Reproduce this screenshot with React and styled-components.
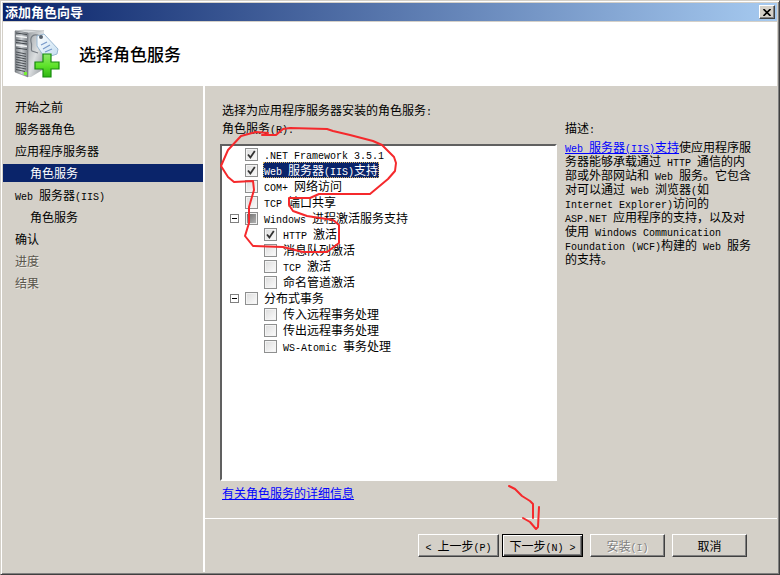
import React from "react";
import styled, { createGlobalStyle } from "styled-components";

const GlobalStyle = createGlobalStyle`
  * {
    box-sizing: border-box;
  }
  body {
    margin: 0;
    background: #d4d0c8;
    color: #000;
    font-family: "Noto Sans CJK SC", sans-serif;
    font-size: 12px;
    line-height: 16px;
  }
`;

const Window = styled.div`
  position: relative;
  display: flex;
  flex-direction: column;
  min-height: 100vh;
  padding: 1px;
  border: 1px solid;
  border-color: #d4d0c8 #404040 #404040 #d4d0c8;
  box-shadow: inset 1px 1px #fff, inset -1px -1px #808080;
`;

const TitleBar = styled.div`
  display: flex;
  align-items: center;
  justify-content: space-between;
  height: 18px;
  margin: 1px;
  padding: 0 2px;
  background: linear-gradient(to right, #0a246a, #a6caf0);
  color: #fff;
  font-size: 13px;
  font-weight: 700;
`;

const CloseButton = styled.button`
  display: flex;
  align-items: center;
  justify-content: center;
  width: 16px;
  height: 14px;
  padding: 0;
  border: 1px solid;
  border-color: #fff #404040 #404040 #fff;
  box-shadow: inset -1px -1px #808080;
  background: #d4d0c8;
`;

const Header = styled.header`
  display: flex;
  align-items: center;
  gap: 16px;
  height: 64px;
  margin: 0 1px;
  padding: 0 10px;
  background: #fff;
`;

const Heading = styled.h1`
  margin: 0;
  font-size: 17px;
  font-weight: 500;
  line-height: 24px;
`;

const Body = styled.div`
  display: flex;
  flex: 1;
  margin: 0 1px 1px;
`;

const Sidebar = styled.nav`
  flex: 0 0 202px;
  padding-top: 12px;
  border-right: 2px solid #fff;
`;

const StepList = styled.ul`
  display: flex;
  flex-direction: column;
  gap: 4px;
  margin: 0;
  padding: 0;
  list-style: none;
`;

const Step = styled.a`
  display: block;
  padding-left: ${(props) => (props.$nested ? 27 : 12)}px;
  background: ${(props) => (props.$active ? "#0a246a" : "transparent")};
  color: ${(props) => (props.$active ? "#fff" : props.$disabled ? "#5a564c" : "#000")};
  text-shadow: ${(props) => (props.$disabled ? "1px 1px #eceae4" : "none")};
  line-height: 18px;
  text-decoration: none;
`;

const Main = styled.main`
  display: flex;
  flex: 1;
  flex-direction: column;
`;

const Content = styled.div`
  display: flex;
  flex: 1;
  gap: 8px;
  padding: 16px 22px 17px 15px;
`;

const Services = styled.section`
  display: flex;
  flex: 1;
  flex-direction: column;
`;

const Caption = styled.p`
  margin: 0 0 2px 2px;
`;

const Tree = styled.ul`
  flex: 1;
  margin: 6px 0 4px;
  padding: 0 0 0 8px;
  border: 2px solid;
  border-color: #606060 #fff #fff #606060;
  background: #fff;
  list-style: none;
`;

const Branch = styled.ul`
  margin: 0;
  padding: 0 0 0 19px;
  list-style: none;
`;

const Row = styled.div`
  display: flex;
  align-items: center;
  height: 16px;
`;

const ExpanderSlot = styled.span`
  display: flex;
  width: 15px;
`;

const Expander = styled.button`
  display: flex;
  align-items: center;
  justify-content: center;
  width: 9px;
  height: 9px;
  padding: 0;
  border: 1px solid #808080;
  background: #fff;

  &::before {
    content: "";
    width: 5px;
    height: 1px;
    background: #000;
  }
`;

const CheckLabel = styled.label`
  display: flex;
  align-items: center;
  gap: 5px;
`;

const BoxStack = styled.span`
  display: grid;
  place-items: center;

  & > * {
    grid-area: 1 / 1;
  }
`;

const Box = styled.input`
  appearance: none;
  width: 13px;
  height: 13px;
  margin: 0;
  border: 1px solid #8e8f8f;
  background: linear-gradient(135deg, #dcdcdc, #fcfcfc);
  box-shadow: inset 0 0 0 1px #f4f4f4;

  &:indeterminate {
    background: linear-gradient(135deg, #666, #b8b8b8);
    box-shadow: inset 0 0 0 1px #f0f0f0;
  }
`;

const Tick = styled.svg`
  pointer-events: none;
`;

const RowText = styled.span`
  padding: 0 1px;
  background: ${(props) => (props.$selected ? "#0a246a" : "transparent")};
  color: ${(props) => (props.$selected ? "#fff" : "#000")};
  outline: ${(props) => (props.$selected ? "1px dotted #d8b060" : "none")};
  outline-offset: -1px;
  white-space: nowrap;
`;

const Latin = styled.span`
  font-family: "Liberation Mono", monospace;
  font-size: 10px;
  line-height: 8px;
`;

const Link = styled.a`
  color: #00f;
`;

const MoreLink = styled(Link)`
  align-self: flex-start;
  margin-left: 2px;
`;

const Description = styled.aside`
  flex: 0 0 190px;
  padding-top: 18px;
`;

const DescriptionText = styled.p`
  margin: 4px 0 0;
  line-height: 14px;
`;

const Footer = styled.footer`
  display: flex;
  justify-content: flex-end;
  gap: 7px;
  padding: 15px 30px 15px;
  border-top: 1px solid #fff;
`;

const ButtonPair = styled.div`
  display: flex;
  gap: 3px;
`;

const Button = styled.button`
  width: ${(props) => (props.$wide ? 81 : 75)}px;
  height: 23px;
  padding: 0;
  border: 1px solid;
  border-color: ${(props) => (props.$primary ? "#000" : "#fff #404040 #404040 #fff")};
  box-shadow: ${(props) =>
    props.$primary
      ? "inset 1px 1px #fff, inset -1px -1px #404040, inset -2px -2px #808080"
      : "inset -1px -1px #808080"};
  background: #d4d0c8;
  color: #000;
  font: inherit;
  white-space: pre;

  &:disabled {
    color: #808080;
    text-shadow: 1px 1px #fff;
  }
`;

const Marks = styled.svg`
  position: absolute;
  top: -1px;
  left: -1px;
  pointer-events: none;
`;

const steps = [
  { name: "开始之前" },
  { name: "服务器角色" },
  { name: "应用程序服务器" },
  { name: "角色服务", nested: true, active: true },
  { name: "Web 服务器(IIS)" },
  { name: "角色服务", nested: true },
  { name: "确认" },
  { name: "进度", disabled: true },
  { name: "结果", disabled: true },
];

const services = [
  { name: ".NET Framework 3.5.1", checked: true },
  { name: "Web 服务器(IIS)支持", checked: true, selected: true },
  { name: "COM+ 网络访问" },
  { name: "TCP 端口共享" },
  {
    name: "Windows 进程激活服务支持",
    partial: true,
    children: [
      { name: "HTTP 激活", checked: true },
      { name: "消息队列激活" },
      { name: "TCP 激活" },
      { name: "命名管道激活" },
    ],
  },
  {
    name: "分布式事务",
    children: [
      { name: "传入远程事务处理" },
      { name: "传出远程事务处理" },
      { name: "WS-Atomic 事务处理" },
    ],
  },
];

// Half-width characters take exactly half the width of a Chinese one.
const Mixed = ({ children }) =>
  children
    .split(/([\x20-\x7e]+)/)
    .filter(Boolean)
    .map((part, i) =>
      /^[\x20-\x7e]/.test(part) ? <Latin key={i}>{part}</Latin> : part
    );

const ServiceItem = ({ item }) => {
  const [checked, setChecked] = React.useState(Boolean(item.checked));
  const [open, setOpen] = React.useState(true);

  return (
    <li>
      <Row>
        <ExpanderSlot>
          {item.children && (
            <Expander
              type="button"
              aria-label={item.name}
              aria-expanded={open}
              onClick={() => setOpen(!open)}
            />
          )}
        </ExpanderSlot>
        <CheckLabel>
          <BoxStack>
            <Box
              type="checkbox"
              checked={checked}
              onChange={(e) => setChecked(e.target.checked)}
              ref={(el) => {
                if (el) el.indeterminate = Boolean(item.partial);
              }}
            />
            {checked && (
              <Tick width="9" height="9" viewBox="0 0 9 9">
                <path d="M1 4.5 L3.4 7.4 L7.8 1" fill="none" stroke="#333" strokeWidth="1.8" />
              </Tick>
            )}
          </BoxStack>
          <RowText $selected={item.selected}>
            <Mixed>{item.name}</Mixed>
          </RowText>
        </CheckLabel>
      </Row>
      {item.children && open && (
        <Branch>
          {item.children.map((child) => (
            <ServiceItem key={child.name} item={child} />
          ))}
        </Branch>
      )}
    </li>
  );
};

const ServerIcon = () => (
  <svg width="50" height="52" viewBox="0 0 50 52" aria-hidden="true">
    <defs>
      <linearGradient id="front" x1="0" x2="1">
        <stop offset="0" stopColor="#7b8085" />
        <stop offset="0.5" stopColor="#c9cdd1" />
        <stop offset="1" stopColor="#7d8287" />
      </linearGradient>
      <linearGradient id="side" x1="0" x2="1" y2="1">
        <stop offset="0" stopColor="#9ba0a4" />
        <stop offset="0.5" stopColor="#dcdfe1" />
        <stop offset="1" stopColor="#8a8f94" />
      </linearGradient>
      <linearGradient id="tag" x1="0" x2="1" y2="1">
        <stop offset="0" stopColor="#fff" />
        <stop offset="1" stopColor="#c2dcf0" />
      </linearGradient>
      <linearGradient id="plus" x2="0" y2="1">
        <stop offset="0" stopColor="#8fe56a" />
        <stop offset="0.5" stopColor="#5fe32b" />
        <stop offset="1" stopColor="#2fb512" />
      </linearGradient>
    </defs>
    <path d="M2 3 L12 2 L31 3 L15 5 Z" fill="#d9dcde" stroke="#8b9095" strokeWidth="0.5" />
    <path d="M15 5 L31 3 V41 L18 49 L15 49 Z" fill="url(#side)" />
    <path d="M2 3 L15 5 V49 L2 44 Z" fill="url(#front)" stroke="#666b70" strokeWidth="0.5" />
    <path d="M3 5 L14 6.5 M3 12 L14 13.5 M3 14.5 L14 16 M3 20 L14 21.5" stroke="#42474c" />
    <path d="M3 8 L14 9.5 M3 17 L14 18.5" stroke="#f1f3f4" strokeWidth="1.5" />
    <path d="M3 24 L13 26 M3 26.500 L13 28.500 M3 29 L13 31 M3 31.500 L13 33.500 M3 34 L13 36 M3 36.500 L13 38.500 M3 39 L13 41 M3 41.500 L12 43.500" stroke="#4b5055" />
    <rect x="11" y="44" width="3" height="3" fill="#77ef35" />
    <path d="M27 8 C20 5 17 9 18 14 C20 18 17 21 19 23 L25 25" fill="none" stroke="#777d84" strokeWidth="1.2" />
    <path d="M24 8 L31 6 L45 21 L44 26 L32 30 L24 18 Z" fill="url(#tag)" stroke="#9ab8d2" />
    <circle cx="28" cy="9" r="2" fill="#59626d" />
    <path d="M28 17 L34 14 M30 21 L37 17 M32 24 L39 21" stroke="#7899c9" strokeWidth="1.2" />
    <path d="M30 26 H38 V34 H46 V41 H38 V49 H30 V41 H22 V34 H30 Z" fill="url(#plus)" stroke="#168b0c" strokeWidth="1.2" />
  </svg>
);

const App = () => (
  <>
    <GlobalStyle />
    <Window>
      <TitleBar>
        添加角色向导
        <CloseButton type="button" aria-label="关闭">
          <svg width="8" height="7" viewBox="0 0 8 7">
            <path d="M0.5 0 L7.5 7 M7.5 0 L0.5 7" stroke="#000" strokeWidth="1.6" />
          </svg>
        </CloseButton>
      </TitleBar>
      <Header>
        <ServerIcon />
        <Heading>选择角色服务</Heading>
      </Header>
      <Body>
        <Sidebar>
          <StepList>
            {steps.map((step, i) => (
              <li key={i}>
                <Step
                  href="#"
                  $nested={step.nested}
                  $active={step.active}
                  $disabled={step.disabled}
                >
                  <Mixed>{step.name}</Mixed>
                </Step>
              </li>
            ))}
          </StepList>
        </Sidebar>
        <Main>
          <Content>
            <Services>
              <Caption>
                <Mixed>选择为应用程序服务器安装的角色服务:</Mixed>
              </Caption>
              <Caption as="div" id="services-label">
                <Mixed>角色服务(R):</Mixed>
              </Caption>
              <Tree aria-labelledby="services-label">
                {services.map((item) => (
                  <ServiceItem key={item.name} item={item} />
                ))}
              </Tree>
              <MoreLink href="#">有关角色服务的详细信息</MoreLink>
            </Services>
            <Description>
              <Mixed>描述:</Mixed>
              <DescriptionText>
                <Link href="#">
                  <Mixed>Web 服务器(IIS)支持</Mixed>
                </Link>
                <Mixed>
                  使应用程序服务器能够承载通过 HTTP 通信的内部或外部网站和 Web 服务。它包含对可以通过 Web 浏览器(如 Internet Explorer)访问的 ASP.NET 应用程序的支持，以及对使用 Windows Communication Foundation (WCF)构建的 Web 服务的支持。
                </Mixed>
              </DescriptionText>
            </Description>
          </Content>
          <Footer>
            <ButtonPair>
              <Button type="button" $wide>
                <Mixed>{"< 上一步(P)"}</Mixed>
              </Button>
              <Button type="button" $wide $primary>
                <Mixed>{"下一步(N) >"}</Mixed>
              </Button>
            </ButtonPair>
            <Button type="button" disabled>
              <Mixed>安装(I)</Mixed>
            </Button>
            <Button type="button">取消</Button>
          </Footer>
        </Main>
      </Body>
      <Marks width="780" height="575" viewBox="0 0 780 575" aria-hidden="true">
        <g fill="none" stroke="#f5292c" strokeWidth="2" strokeLinecap="round" strokeLinejoin="round">
          <path d="M262 135 L276 135 L283 129 L290 128 L327 129 L333 131 L350 135 L373 141 L382 145 L394 157 L396 163 L395 171 L388 179 L370 194 L319 194 L310 198 L289 198 L289 205 L293 211 L307 216 L333 220 L339 225 L339 243 L327 252 L303 252 L283 247 L253 246 L245 236 L249 223 L249 207 L254 190 L253 181 L234 182 L228 177 L221 166 L228 150 L241 136 L256 132 L268 133" />
          <path d="M509 486 L515 489 L522 496 L530 501 L533 504 V518 M539 507 L538 527 L536 529 L530 522 L523 518" />
        </g>
      </Marks>
    </Window>
  </>
);

export default App;
